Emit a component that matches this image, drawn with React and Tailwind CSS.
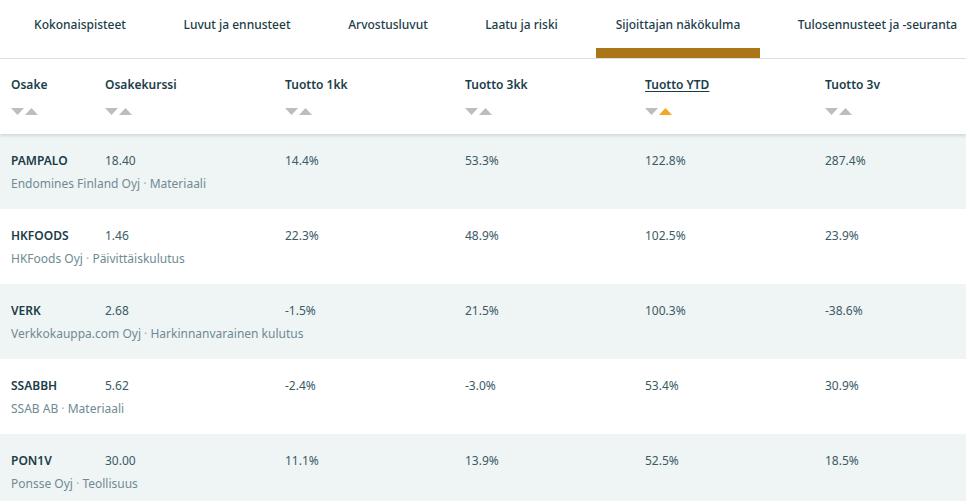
const tabs = [
  { label: 'Kokonaispisteet', w: 'w-[160px]' },
  { label: 'Luvut ja ennusteet', w: 'w-[154px]' },
  { label: 'Arvostusluvut', w: 'w-[148px]' },
  { label: 'Laatu ja riski', w: 'w-[119px] mr-[15px]' },
  { label: 'Sijoittajan näkökulma', w: 'w-[164px]', active: true },
  { label: 'Tulosennusteet ja -seuranta', w: 'w-[235px]' },
]

const cols = [
  { label: 'Osake', w: 'w-[94px]' },
  { label: 'Osakekurssi', w: 'w-[180px]' },
  { label: 'Tuotto 1kk', w: 'w-[180px]' },
  { label: 'Tuotto 3kk', w: 'w-[180px]' },
  { label: 'Tuotto YTD', w: 'w-[180px]', active: true },
  { label: 'Tuotto 3v', w: 'w-[140px]' },
]

const rows = [
  ['PAMPALO', '18.40', '14.4%', '53.3%', '122.8%', '287.4%', 'Endomines Finland Oyj', 'Materiaali'],
  ['HKFOODS', '1.46', '22.3%', '48.9%', '102.5%', '23.9%', 'HKFoods Oyj', 'Päivittäiskulutus'],
  ['VERK', '2.68', '-1.5%', '21.5%', '100.3%', '-38.6%', 'Verkkokauppa.com Oyj', 'Harkinnanvarainen kulutus'],
  ['SSABBH', '5.62', '-2.4%', '-3.0%', '53.4%', '30.9%', 'SSAB AB', 'Materiaali'],
  ['PON1V', '30.00', '11.1%', '13.9%', '52.5%', '18.5%', 'Ponsse Oyj', 'Teollisuus'],
]

function SortArrows({ active }) {
  return (
    <div className="flex gap-px mt-[14px]">
      <svg width="13" height="7" viewBox="0 0 13 7">
        <path d="M0 0h13L6.5 7z" fill="#bdbdbd" />
      </svg>
      <svg width="13" height="7" viewBox="0 0 13 7">
        <path d="M0 7h13L6.5 0z" fill={active ? '#f5a623' : '#bdbdbd'} />
      </svg>
    </div>
  )
}

export default function App() {
  return (
    <div className="w-[966px] h-[501px] overflow-hidden bg-white text-[#1c3d48]"
      style={{ fontFamily: '"Noto Sans", "Open Sans", sans-serif' }}>
      <div className="flex h-[59px] border-b border-[#e0e0e0]">
        {tabs.map(t => (
          <div key={t.label}
            className={`${t.w} shrink-0 text-center pt-[16px] text-[12px] font-medium whitespace-nowrap ${t.active ? 'border-b-[10px] border-[#ab7617]' : ''}`}>
            {t.label}
          </div>
        ))}
      </div>
      <div className="flex h-[75px] pl-[11px] pt-[17px] shadow-[0_2px_3px_rgba(0,0,0,0.12)] relative">
        {cols.map(c => (
          <div key={c.label} className={`${c.w} shrink-0`}>
            <div className={`text-[12px] font-semibold leading-[18px] ${c.active ? 'underline underline-offset-2' : ''}`}>
              {c.label}
            </div>
            <SortArrows active={c.active} />
          </div>
        ))}
      </div>
      {rows.map((r, i) => (
        <div key={r[0]}
          className={`h-[75px] pl-[11px] pt-[18px] ${i % 2 === 0 ? 'bg-[#eff5f5]' : 'bg-white'}`}>
          <div className="flex text-[12px] leading-[18px]">
            <div className="w-[94px] shrink-0 font-semibold text-[#1c3d48]">{r[0]}</div>
            {r.slice(1, 6).map((v, j) => (
              <div key={j} className={`${j === 4 ? 'w-[140px]' : 'w-[180px]'} shrink-0 text-[#3b5a66]`}>{v}</div>
            ))}
          </div>
          <div className="mt-[5px] text-[12px] leading-[18px] text-[#6f8a94]">
            {r[6]} <span className="text-[#9fb1b7]">·</span> {r[7]}
          </div>
        </div>
      ))}
    </div>
  )
}
